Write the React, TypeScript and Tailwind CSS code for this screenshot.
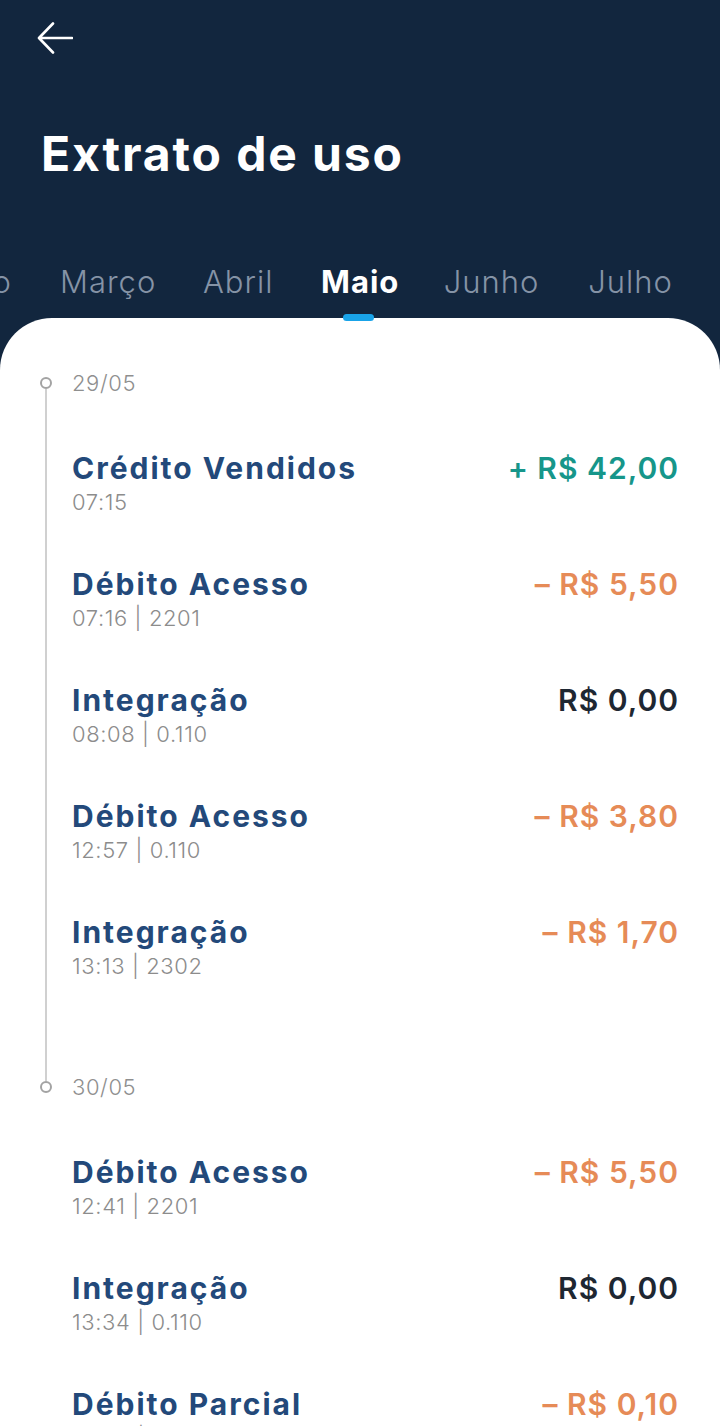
import React from "react";

type Entry = {
  title: string;
  detail: string;
  amount: string;
  kind: "credit" | "debit" | "zero";
};

const groups: { date: string; entries: Entry[] }[] = [
  {
    date: "29/05",
    entries: [
      { title: "Crédito Vendidos", detail: "07:15", amount: "+ R$ 42,00", kind: "credit" },
      { title: "Débito Acesso", detail: "07:16 | 2201", amount: "– R$ 5,50", kind: "debit" },
      { title: "Integração", detail: "08:08 | 0.110", amount: "R$ 0,00", kind: "zero" },
      { title: "Débito Acesso", detail: "12:57 | 0.110", amount: "– R$ 3,80", kind: "debit" },
      { title: "Integração", detail: "13:13 | 2302", amount: "– R$ 1,70", kind: "debit" },
    ],
  },
  {
    date: "30/05",
    entries: [
      { title: "Débito Acesso", detail: "12:41 | 2201", amount: "– R$ 5,50", kind: "debit" },
      { title: "Integração", detail: "13:34 | 0.110", amount: "R$ 0,00", kind: "zero" },
      { title: "Débito Parcial", detail: "13:40 | 2201", amount: "– R$ 0,10", kind: "debit" },
    ],
  },
];

const amountColor = {
  credit: "text-[#16968a]",
  debit: "text-[#e68b57]",
  zero: "text-[#1e2732]",
};

const months = [
  { name: "Fevereiro", w: "w-[150px]", align: "text-right" },
  { name: "Março", w: "w-[95px]", align: "text-center" },
  { name: "Abril", w: "w-[70px]", align: "text-center" },
  { name: "Maio", w: "w-[74px]", align: "text-center", active: true },
  { name: "Junho", w: "w-[97px]", align: "text-center" },
  { name: "Julho", w: "w-[85px]", align: "text-center" },
  { name: "Agosto", w: "w-[110px]", align: "text-center" },
];

const EntryRow = ({ entry }: { entry: Entry }) => (
  <div className="flex items-start justify-between pr-[41px]">
    <div className="flex flex-col">
      <span className="text-[30px] leading-[36px] font-bold text-[#23497a] tracking-[2px]">
        {entry.title}
      </span>
      <span className="mt-[2px] text-[22px] leading-[28px] font-light text-[#8c8c8c] tracking-[0.6px]">
        {entry.detail}
      </span>
    </div>
    <span className={`text-[30px] leading-[36px] font-semibold tracking-[1px] ${amountColor[entry.kind]}`}>
      {entry.amount}
    </span>
  </div>
);

const App = () => {
  return (
    <div
      className="w-[720px] h-[1426px] overflow-hidden bg-[#12263e] flex flex-col"
      style={{ fontFamily: "Inter, 'Noto Sans', sans-serif" }}
    >
      {/* Header */}
      <div className="pl-[37px] pt-[22px]">
        <button className="block">
          <svg width="36" height="32" viewBox="0 0 36 32" fill="none">
            <path
              d="M35 16H3M16 1.5L2 16l14 14.5"
              stroke="white"
              strokeWidth="2.6"
              strokeLinecap="round"
              strokeLinejoin="round"
            />
          </svg>
        </button>
      </div>
      <h1 className="mt-[70px] pl-[41px] text-[48px] leading-[60px] font-bold text-white tracking-[1.9px]">
        Extrato de uso
      </h1>

      {/* Month tabs */}
      <div className="mt-[78px] -mb-[3px] flex gap-[48px] ml-[-138px] relative z-10 whitespace-nowrap">
        {months.map((m) => (
          <div key={m.name} className={`${m.w} shrink-0 flex flex-col items-center`}>
            <span
              className={`w-full text-[31px] leading-[40px] tracking-[1px] ${m.align} ${
                m.active ? "font-bold text-white" : "font-light text-[#8593a6]"
              }`}
            >
              {m.name}
            </span>
            <div
              className={`mt-[12px] w-[31px] h-[7px] rounded-full ${m.active ? "bg-[#19a3e8]" : "bg-transparent"}`}
            />
          </div>
        ))}
      </div>

      {/* Statement panel */}
      <div className="flex-1 bg-white rounded-t-[52px] pt-[50px]">
        {groups.map((g, gi) => (
          <div key={g.date} className="flex">
            <div className="w-[72px] shrink-0 flex flex-col">
              {gi === 0 ? (
                <div className="h-[9px]" />
              ) : (
                <div className="ml-[45px] w-[2px] h-[9px] bg-[#d0d0d0]" />
              )}
              <div className="ml-[40px] w-[12px] h-[12px] rounded-full border-2 border-[#a3a3a3]" />
              {gi === 0 && <div className="ml-[45px] w-[2px] flex-1 bg-[#d0d0d0]" />}
            </div>
            <div className={`flex-1 flex flex-col ${gi === 0 ? "pb-[92px]" : ""}`}>
              <div className="h-[30px] flex items-center text-[22px] font-light text-[#8f8f8f] tracking-[0.6px]">
                {g.date}
              </div>
              <div className="pt-[52px] flex flex-col gap-[50px]">
                {g.entries.map((e, i) => (
                  <EntryRow key={i} entry={e} />
                ))}
              </div>
            </div>
          </div>
        ))}
      </div>
    </div>
  );
};

export default App;
